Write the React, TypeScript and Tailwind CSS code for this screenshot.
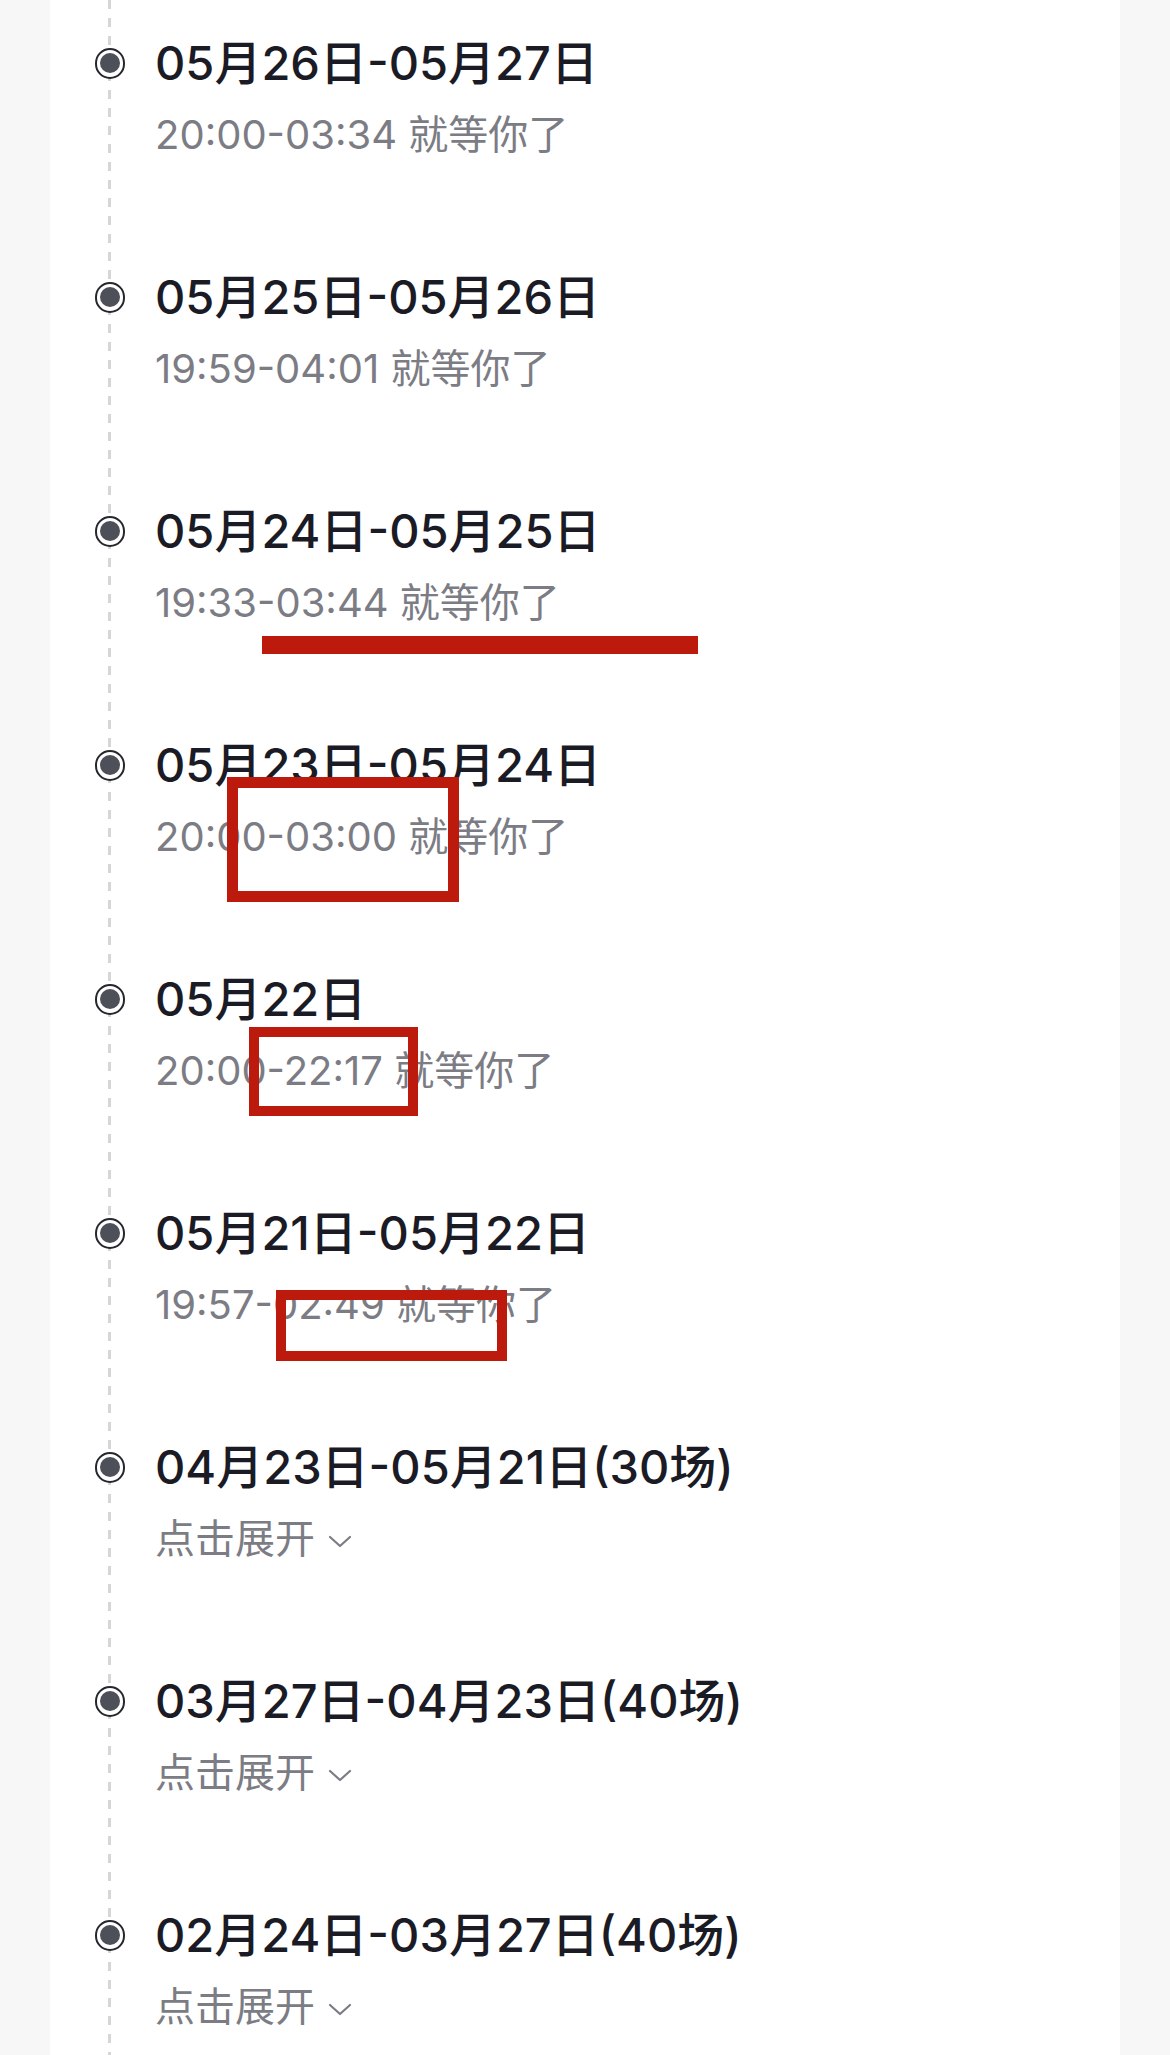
import React from "react";

type Item = { title: string; sub?: string; expand?: boolean };

const items: Item[] = [
  { title: "05月26日-05月27日", sub: "20:00-03:34 就等你了" },
  { title: "05月25日-05月26日", sub: "19:59-04:01 就等你了" },
  { title: "05月24日-05月25日", sub: "19:33-03:44 就等你了" },
  { title: "05月23日-05月24日", sub: "20:00-03:00 就等你了" },
  { title: "05月22日", sub: "20:00-22:17 就等你了" },
  { title: "05月21日-05月22日", sub: "19:57-02:49 就等你了" },
  { title: "04月23日-05月21日(30场)", expand: true },
  { title: "03月27日-04月23日(40场)", expand: true },
  { title: "02月24日-03月27日(40场)", expand: true },
];

function Dot() {
  return (
    <div className="w-[31px] h-[31px] rounded-full border-[2px] border-[#26262e] bg-white flex items-center justify-center">
      <div className="w-[20px] h-[20px] rounded-full bg-[#4d4f59]" />
    </div>
  );
}

function Chevron() {
  return (
    <svg width="26" height="16" viewBox="0 0 26 16" fill="none" className="ml-[12px] mt-[4px]">
      <polyline points="3,4 13,13 23,4" stroke="#7c7c84" strokeWidth="2.2" strokeLinecap="round" strokeLinejoin="round" />
    </svg>
  );
}

export default function App() {
  return (
    <div className="relative min-h-[2055px] w-full bg-[#f7f7f7] px-[50px] font-[Inter,'Noto_Sans_CJK_SC',sans-serif] overflow-hidden">
      <div className="relative bg-white min-h-[2055px] pl-[45px] pt-[31px]">
        <div className="absolute left-[58px] top-0 bottom-0 w-[3px] bg-[repeating-linear-gradient(to_bottom,#d6d6d6_0px,#d6d6d6_9px,transparent_9px,transparent_18px)]" />
        <div className="relative flex flex-col">
          {items.map((it, i) => (
            <div key={i} className="flex flex-col h-[234px]">
              <div className="flex items-center h-[64px]">
                <div className="w-[30px] flex justify-center">
                  <Dot />
                </div>
                <div className="ml-[30px] text-[47px] leading-[64px] font-medium text-[#1b1b26]">
                  {it.title}
                </div>
              </div>
              <div className="mt-[12px] pl-[60px] h-[56px] flex items-center text-[40px] leading-[56px] text-[#7c7c84]">
                {it.expand ? (
                  <>
                    <span>点击展开</span>
                    <Chevron />
                  </>
                ) : (
                  <span>{it.sub}</span>
                )}
              </div>
            </div>
          ))}
        </div>
      </div>

      {/* red annotation marks */}
      <div className="absolute left-[262px] top-[636px] w-[436px] h-[18px] bg-[#bb1a0c]" />
      <div className="absolute left-[227px] top-[777px] w-[232px] h-[125px] border-[11px] border-[#bb1a0c]" />
      <div className="absolute left-[249px] top-[1027px] w-[169px] h-[89px] border-[10px] border-[#bb1a0c]" />
      <div className="absolute left-[276px] top-[1290px] w-[231px] h-[71px] border-[10px] border-[#bb1a0c]" />
    </div>
  );
}
